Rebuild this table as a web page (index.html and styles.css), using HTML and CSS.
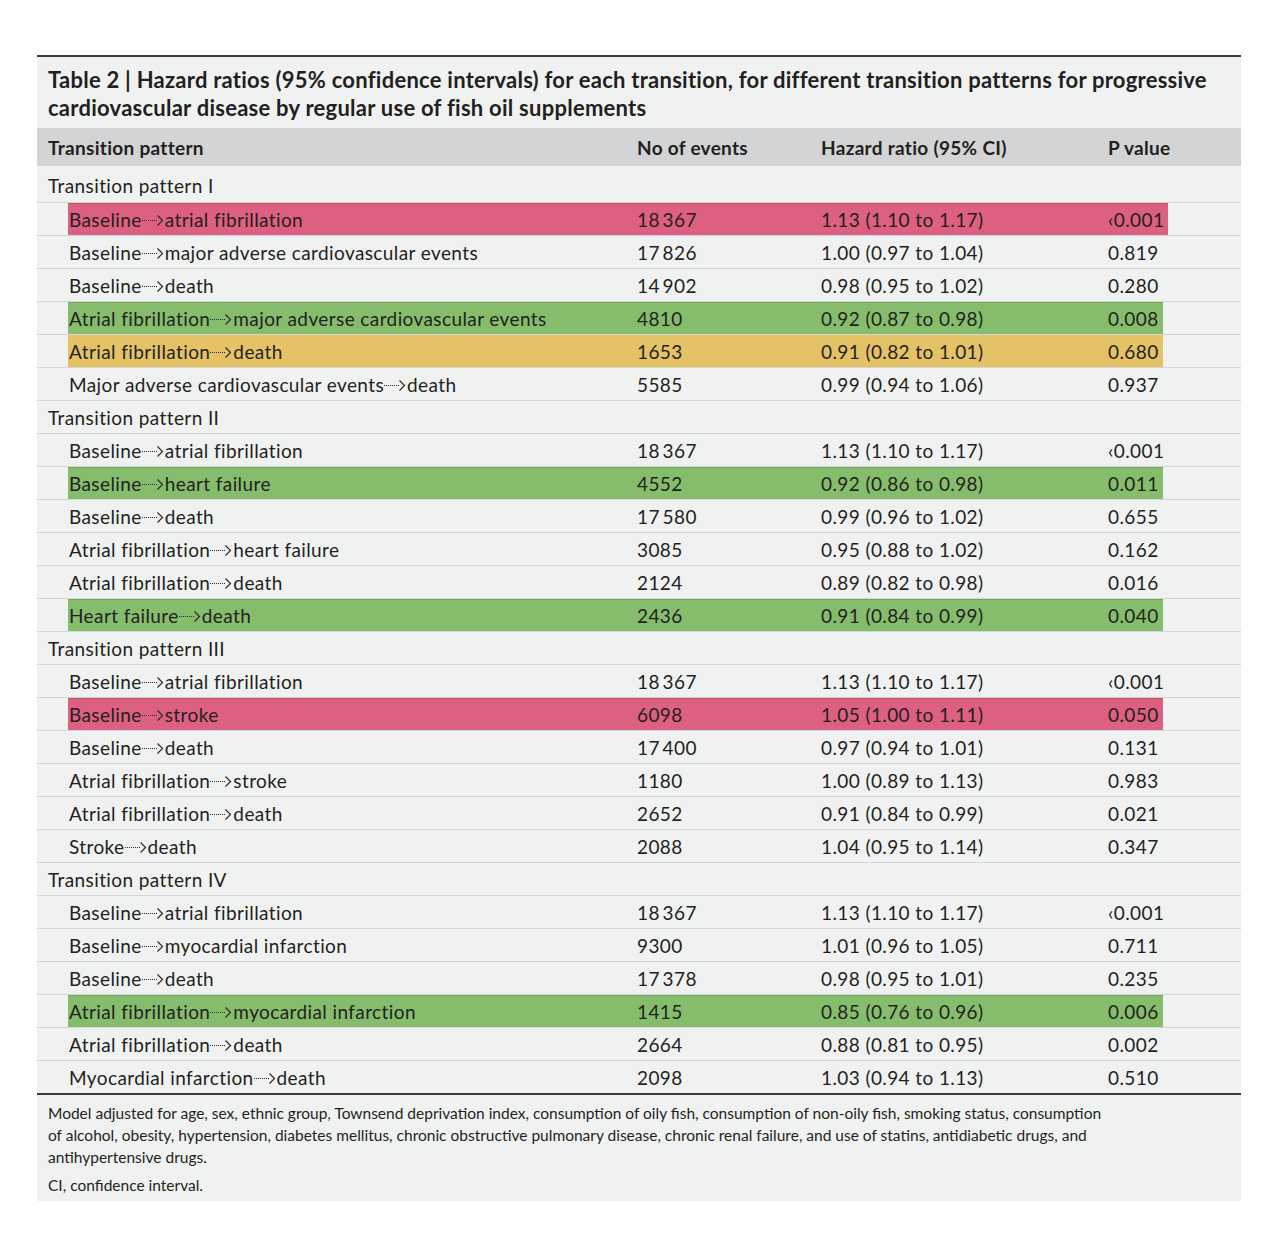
FILE: index.html
```html
<!DOCTYPE html>
<html lang="en">
<head>
<meta charset="utf-8">
<title>Table 2</title>
<link rel="stylesheet" href="styles.css">
</head>
<body>
<svg width="0" height="0" class="defs" aria-hidden="true">
  <defs>
    <symbol id="arr" viewBox="0 0 22 14">
      <line x1="0" y1="8.5" x2="16" y2="8.5" stroke="#2a2a2a" stroke-width="1" stroke-dasharray="1 1"/>
      <path d="M15.5 3.5 Q18.5 6.5 20.5 8.5 Q18.5 10.5 15.5 13.5" fill="none" stroke="#2a2a2a" stroke-width="1.2"/>
    </symbol>
  </defs>
</svg>
<div class="table">
  <h2 class="title">Table 2 | Hazard ratios (95% confidence intervals) for each transition, for different transition patterns for progressive cardiovascular disease by regular use of fish oil supplements</h2>
  <div class="head">
    <div>Transition pattern</div>
    <div>No of events</div>
    <div>Hazard ratio (95% CI)</div>
    <div>P value</div>
  </div>

  <div class="section first">Transition pattern I</div>
  <div class="row"><div class="cells hl-red"><div class="c1">Baseline<svg class="arrow"><use href="#arr"/></svg>atrial fibrillation</div><div>18&#8201;367</div><div>1.13 (1.10 to 1.17)</div><div>‹0.001</div></div></div>
  <div class="row"><div class="cells"><div class="c1">Baseline<svg class="arrow"><use href="#arr"/></svg>major adverse cardiovascular events</div><div>17&#8201;826</div><div>1.00 (0.97 to 1.04)</div><div>0.819</div></div></div>
  <div class="row"><div class="cells"><div class="c1">Baseline<svg class="arrow"><use href="#arr"/></svg>death</div><div>14&#8201;902</div><div>0.98 (0.95 to 1.02)</div><div>0.280</div></div></div>
  <div class="row"><div class="cells hl-green"><div class="c1">Atrial fibrillation<svg class="arrow"><use href="#arr"/></svg>major adverse cardiovascular events</div><div>4810</div><div>0.92 (0.87 to 0.98)</div><div>0.008</div></div></div>
  <div class="row"><div class="cells hl-amber"><div class="c1">Atrial fibrillation<svg class="arrow"><use href="#arr"/></svg>death</div><div>1653</div><div>0.91 (0.82 to 1.01)</div><div>0.680</div></div></div>
  <div class="row"><div class="cells"><div class="c1">Major adverse cardiovascular events<svg class="arrow"><use href="#arr"/></svg>death</div><div>5585</div><div>0.99 (0.94 to 1.06)</div><div>0.937</div></div></div>

  <div class="section">Transition pattern II</div>
  <div class="row"><div class="cells"><div class="c1">Baseline<svg class="arrow"><use href="#arr"/></svg>atrial fibrillation</div><div>18&#8201;367</div><div>1.13 (1.10 to 1.17)</div><div>‹0.001</div></div></div>
  <div class="row"><div class="cells hl-green"><div class="c1">Baseline<svg class="arrow"><use href="#arr"/></svg>heart failure</div><div>4552</div><div>0.92 (0.86 to 0.98)</div><div>0.011</div></div></div>
  <div class="row"><div class="cells"><div class="c1">Baseline<svg class="arrow"><use href="#arr"/></svg>death</div><div>17&#8201;580</div><div>0.99 (0.96 to 1.02)</div><div>0.655</div></div></div>
  <div class="row"><div class="cells"><div class="c1">Atrial fibrillation<svg class="arrow"><use href="#arr"/></svg>heart failure</div><div>3085</div><div>0.95 (0.88 to 1.02)</div><div>0.162</div></div></div>
  <div class="row"><div class="cells"><div class="c1">Atrial fibrillation<svg class="arrow"><use href="#arr"/></svg>death</div><div>2124</div><div>0.89 (0.82 to 0.98)</div><div>0.016</div></div></div>
  <div class="row"><div class="cells hl-green"><div class="c1">Heart failure<svg class="arrow"><use href="#arr"/></svg>death</div><div>2436</div><div>0.91 (0.84 to 0.99)</div><div>0.040</div></div></div>

  <div class="section">Transition pattern III</div>
  <div class="row"><div class="cells"><div class="c1">Baseline<svg class="arrow"><use href="#arr"/></svg>atrial fibrillation</div><div>18&#8201;367</div><div>1.13 (1.10 to 1.17)</div><div>‹0.001</div></div></div>
  <div class="row"><div class="cells hl-red"><div class="c1">Baseline<svg class="arrow"><use href="#arr"/></svg>stroke</div><div>6098</div><div>1.05 (1.00 to 1.11)</div><div>0.050</div></div></div>
  <div class="row"><div class="cells"><div class="c1">Baseline<svg class="arrow"><use href="#arr"/></svg>death</div><div>17&#8201;400</div><div>0.97 (0.94 to 1.01)</div><div>0.131</div></div></div>
  <div class="row"><div class="cells"><div class="c1">Atrial fibrillation<svg class="arrow"><use href="#arr"/></svg>stroke</div><div>1180</div><div>1.00 (0.89 to 1.13)</div><div>0.983</div></div></div>
  <div class="row"><div class="cells"><div class="c1">Atrial fibrillation<svg class="arrow"><use href="#arr"/></svg>death</div><div>2652</div><div>0.91 (0.84 to 0.99)</div><div>0.021</div></div></div>
  <div class="row"><div class="cells"><div class="c1">Stroke<svg class="arrow"><use href="#arr"/></svg>death</div><div>2088</div><div>1.04 (0.95 to 1.14)</div><div>0.347</div></div></div>

  <div class="section">Transition pattern IV</div>
  <div class="row"><div class="cells"><div class="c1">Baseline<svg class="arrow"><use href="#arr"/></svg>atrial fibrillation</div><div>18&#8201;367</div><div>1.13 (1.10 to 1.17)</div><div>‹0.001</div></div></div>
  <div class="row"><div class="cells"><div class="c1">Baseline<svg class="arrow"><use href="#arr"/></svg>myocardial infarction</div><div>9300</div><div>1.01 (0.96 to 1.05)</div><div>0.711</div></div></div>
  <div class="row"><div class="cells"><div class="c1">Baseline<svg class="arrow"><use href="#arr"/></svg>death</div><div>17&#8201;378</div><div>0.98 (0.95 to 1.01)</div><div>0.235</div></div></div>
  <div class="row"><div class="cells hl-green"><div class="c1">Atrial fibrillation<svg class="arrow"><use href="#arr"/></svg>myocardial infarction</div><div>1415</div><div>0.85 (0.76 to 0.96)</div><div>0.006</div></div></div>
  <div class="row"><div class="cells"><div class="c1">Atrial fibrillation<svg class="arrow"><use href="#arr"/></svg>death</div><div>2664</div><div>0.88 (0.81 to 0.95)</div><div>0.002</div></div></div>
  <div class="row last"><div class="cells"><div class="c1">Myocardial infarction<svg class="arrow"><use href="#arr"/></svg>death</div><div>2098</div><div>1.03 (0.94 to 1.13)</div><div>0.510</div></div></div>

  <div class="foot">
    <p>Model adjusted for age, sex, ethnic group, Townsend deprivation index, consumption of oily fish, consumption of non-oily fish, smoking status, consumption of alcohol, obesity, hypertension, diabetes mellitus, chronic obstructive pulmonary disease, chronic renal failure, and use of statins, antidiabetic drugs, and antihypertensive drugs.</p>
    <p>CI, confidence interval.</p>
  </div>
</div>
</body>
</html>
```
FILE: styles.css
```css
body {
  margin: 0;
  background: #ffffff;
  font-family: Lato, "Open Sans", sans-serif;
  color: #231f20;
}

.defs {
  position: absolute;
  width: 0;
  height: 0;
}

.table {
  margin: 55px 0 0 37px;
  width: 1204px;
  background: #f0f2f1;
  border-top: 2px solid #3c3c3c;
}

.title {
  margin: 0;
  padding: 9px 11px 6px;
  font-size: 22px;
  line-height: 28px;
  font-weight: 700;
  letter-spacing: 0.25px;
}

.head {
  display: grid;
  grid-template-columns: 589px 184px 287px 1fr;
  align-items: center;
  height: 38px;
  padding-left: 11px;
  background: #d3d4d5;
  font-size: 19px;
  font-weight: 700;
  letter-spacing: 0.3px;
}

.section {
  display: flex;
  align-items: center;
  height: 32px;
  padding-left: 11px;
  border-bottom: 1px solid #d4d5d5;
  font-size: 19px;
  letter-spacing: 0.4px;
}

.section.first {
  box-sizing: border-box;
  height: 37px;
  padding-top: 2px;
}

.row {
  display: flex;
  height: 32px;
  padding-left: 31px;
  border-bottom: 1px solid #d4d5d5;
  font-size: 19px;
  letter-spacing: 0.4px;
}

.row.last {
  border-bottom: 2px solid #3c3c3c;
}

.cells {
  display: grid;
  grid-template-columns: 569px 184px 287px auto;
  align-items: center;
  padding-right: 4px;
}

.c1 {
  display: flex;
  align-items: center;
  padding-left: 1px;
}

.arrow {
  width: 22px;
  height: 14px;
  margin: 0 1px 0 0;
}

.hl-red {
  background: #de6081;
  box-shadow: inset 0 1px 0 rgba(0, 0, 0, 0.15);
}

.hl-green {
  background: #85bd6d;
  box-shadow: inset 0 1px 0 rgba(0, 0, 0, 0.12);
}

.hl-amber {
  background: #e6c266;
}

.foot {
  padding: 7px 131px 5px 11px;
  font-size: 15.5px;
  line-height: 22px;
}

.foot p {
  margin: 0 0 6px;
}

.foot p:last-child {
  margin-bottom: 0;
}
```
